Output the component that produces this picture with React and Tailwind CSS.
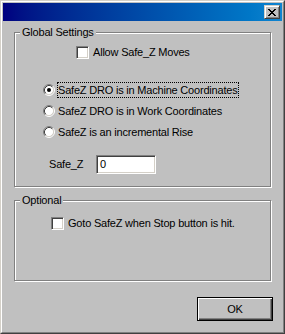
import React from "react";

const FONT = { fontFamily: '"Liberation Sans", Arial, sans-serif' };

function Radio({ checked }) {
  return (
    <svg width="12" height="12" viewBox="0 0 12 12" className="shrink-0">
      <circle cx="6" cy="6" r="4.5" fill="#fff" />
      <path d="M2.11 9.89 A5.5 5.5 0 0 1 9.89 2.11" fill="none" stroke="#808080" strokeWidth="1" />
      <path d="M9.89 2.11 A5.5 5.5 0 0 1 2.11 9.89" fill="none" stroke="#ffffff" strokeWidth="1" />
      <path d="M2.82 9.18 A4.5 4.5 0 0 1 9.18 2.82" fill="none" stroke="#404040" strokeWidth="1" />
      <path d="M9.18 2.82 A4.5 4.5 0 0 1 2.82 9.18" fill="none" stroke="#d4d0c8" strokeWidth="1" />
      {checked && <circle cx="6" cy="6" r="2" fill="#000" />}
    </svg>
  );
}

function Check() {
  return (
    <div className="w-[13px] h-[13px] shrink-0 bg-white border border-t-[#808080] border-l-[#808080] border-r-white border-b-white shadow-[inset_1px_1px_0_#404040,inset_-1px_-1px_0_#d4d0c8]" />
  );
}

function Group({ label, className, children }) {
  return (
    <div
      className={
        "relative w-[257px] border border-[#808080] shadow-[inset_1px_1px_0_#fff,1px_1px_0_#fff] " +
        className
      }
    >
      <span className="absolute left-[5px] -top-[8px] px-[2px] bg-[#c0c0c0] leading-[14px]">
        {label}
      </span>
      {children}
    </div>
  );
}

function CloseGlyph() {
  const rows = [
    "XX....XX",
    ".XX..XX.",
    "..XXXX..",
    "...XX...",
    "..XXXX..",
    ".XX..XX.",
    "XX....XX",
  ];
  const rects = [];
  rows.forEach((r, y) =>
    r.split("").forEach((c, x) => {
      if (c === "X") rects.push(<rect key={x + "-" + y} x={x} y={y} width="1" height="1" fill="#000" />);
    })
  );
  return (
    <svg width="8" height="7" viewBox="0 0 8 7" shapeRendering="crispEdges">
      {rects}
    </svg>
  );
}

export default function App() {
  return (
    <div
      style={FONT}
      className="w-[285px] h-[334px] bg-[#c0c0c0] text-[11px] tracking-[-0.2px] text-black border border-t-[#d4d0c8] border-l-[#d4d0c8] border-r-[#404040] border-b-[#404040]"
    >
      <div className="h-full flex flex-col p-[1px] border border-t-white border-l-white border-r-[#808080] border-b-[#808080]">
        {/* title bar */}
        <div className="h-[18px] shrink-0 flex items-center justify-end pr-[2px] bg-gradient-to-r from-[#000080] to-[#1084d0]">
          <div className="w-[16px] h-[14px] flex items-center justify-center bg-[#c0c0c0] border border-t-[#d4d0c8] border-l-[#d4d0c8] border-r-[#404040] border-b-[#404040] shadow-[inset_1px_1px_0_#fff,inset_-1px_-1px_0_#808080]">
            <CloseGlyph />
          </div>
        </div>

        {/* body */}
        <div className="flex flex-col pl-[11px] pt-[11px]">
          <Group label="Global Settings" className="h-[155px]">
            <div className="flex flex-col pt-[13px]">
              <div className="flex items-center h-[13px] pl-[61px] gap-[4px]">
                <Check />
                <span>Allow Safe_Z Moves</span>
              </div>
              <div className="flex flex-col mt-[20px] pl-[28px]">
                <div className="flex items-center h-[21px]">
                  <Radio checked />
                  <span className="ml-[2px] border border-dotted border-black leading-[14px] pr-[1px]">
                    SafeZ DRO is in Machine Coordinates
                  </span>
                </div>
                <div className="flex items-center h-[21px]">
                  <Radio />
                  <span className="ml-[2px] border border-transparent leading-[14px]">
                    SafeZ DRO is in Work Coordinates
                  </span>
                </div>
                <div className="flex items-center h-[21px]">
                  <Radio />
                  <span className="ml-[2px] border border-transparent leading-[14px]">
                    SafeZ is an incremental Rise
                  </span>
                </div>
              </div>
              <div className="flex items-center h-[19px] mt-[13px] pl-[34px]">
                <span className="w-[47px]">Safe_Z</span>
                <div className="w-[60px] h-[19px] flex items-center pl-[3px] bg-white border border-t-[#808080] border-l-[#808080] border-r-white border-b-white shadow-[inset_1px_1px_0_#404040,inset_-1px_-1px_0_#d4d0c8]">
                  0
                </div>
              </div>
            </div>
          </Group>

          <Group label="Optional" className="h-[81px] mt-[13px]">
            <div className="flex items-center h-[13px] mt-[16px] pl-[36px] gap-[4px]">
              <Check />
              <span>Goto SafeZ when Stop button is hit.</span>
            </div>
          </Group>

          <div className="mt-[16px] ml-[183px] w-[76px] h-[24px] flex items-center justify-center border border-black shadow-[inset_1px_1px_0_#fff,inset_-1px_-1px_0_#404040,inset_-2px_-2px_0_#808080]">
            OK
          </div>
        </div>
      </div>
    </div>
  );
}
